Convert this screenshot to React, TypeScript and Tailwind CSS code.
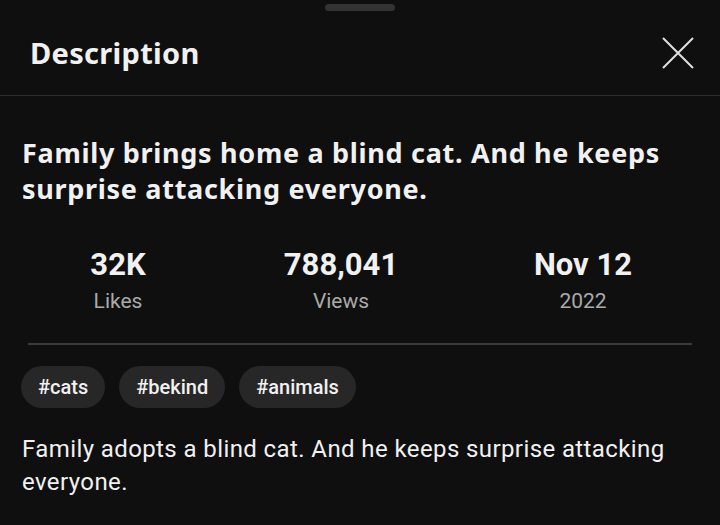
const STATS = [
  { value: '32K', label: 'Likes' },
  { value: '788,041', label: 'Views' },
  { value: 'Nov 12', label: '2022' },
];

const TAGS = ['#cats', '#bekind', '#animals'];

export default function App() {
  return (
    <div className="w-[720px] h-[525px] overflow-hidden bg-[#0f0f0f] text-white" style={{ fontFamily: 'Roboto, sans-serif' }}>
      {/* drag handle */}
      <div className="flex justify-center pt-[4px]">
        <div className="h-[7px] w-[70px] rounded-full bg-[#333333]" />
      </div>

      {/* header */}
      <div className="flex items-center justify-between pl-[30px] pr-[26px] h-[85px] border-b border-[#2e2e2e]">
        <h1 className="text-[29px] font-bold tracking-[0.3px] text-[#f1f1f1]" style={{ fontFamily: '"Noto Sans", sans-serif' }}>
          Description
        </h1>
        <svg width="32" height="32" viewBox="0 0 32 32" className="text-[#e0e0e0]">
          <path d="M1 1 L31 31 M31 1 L1 31" stroke="currentColor" strokeWidth="2" fill="none" />
        </svg>
      </div>

      {/* title */}
      <h2
        className="px-[22px] pt-[39px] text-[27px] leading-[36px] font-bold tracking-[0.7px] text-[#f1f1f1]"
        style={{ fontFamily: '"Noto Sans", sans-serif' }}
      >
        Family brings home a blind cat. And he keeps surprise attacking everyone.
      </h2>

      {/* stats */}
      <div className="grid grid-cols-[236px_210px_274px] pt-[40px]">
        {STATS.map((s) => (
          <div key={s.label} className="flex flex-col items-center">
            <div className="text-[31px] leading-[36px] font-bold text-[#f1f1f1]">{s.value}</div>
            <div className="text-[21px] leading-[36px] text-[#aaaaaa]">{s.label}</div>
          </div>
        ))}
      </div>

      <div className="mx-[28px] mt-[24px] h-[2px] bg-[#3a3a3a]" />

      {/* tags */}
      <div className="flex gap-[14px] px-[21px] pt-[21px]">
        {TAGS.map((t) => (
          <span key={t} className="h-[42px] px-[17px] flex items-center rounded-full bg-[#272727] text-[20px] font-medium text-[#f1f1f1]">
            {t}
          </span>
        ))}
      </div>

      {/* description */}
      <p className="px-[22px] pt-[25px] text-[24px] leading-[33px] tracking-[0.4px] text-[#f1f1f1]">
        Family adopts a blind cat. And he keeps surprise attacking everyone.
      </p>
    </div>
  );
}
